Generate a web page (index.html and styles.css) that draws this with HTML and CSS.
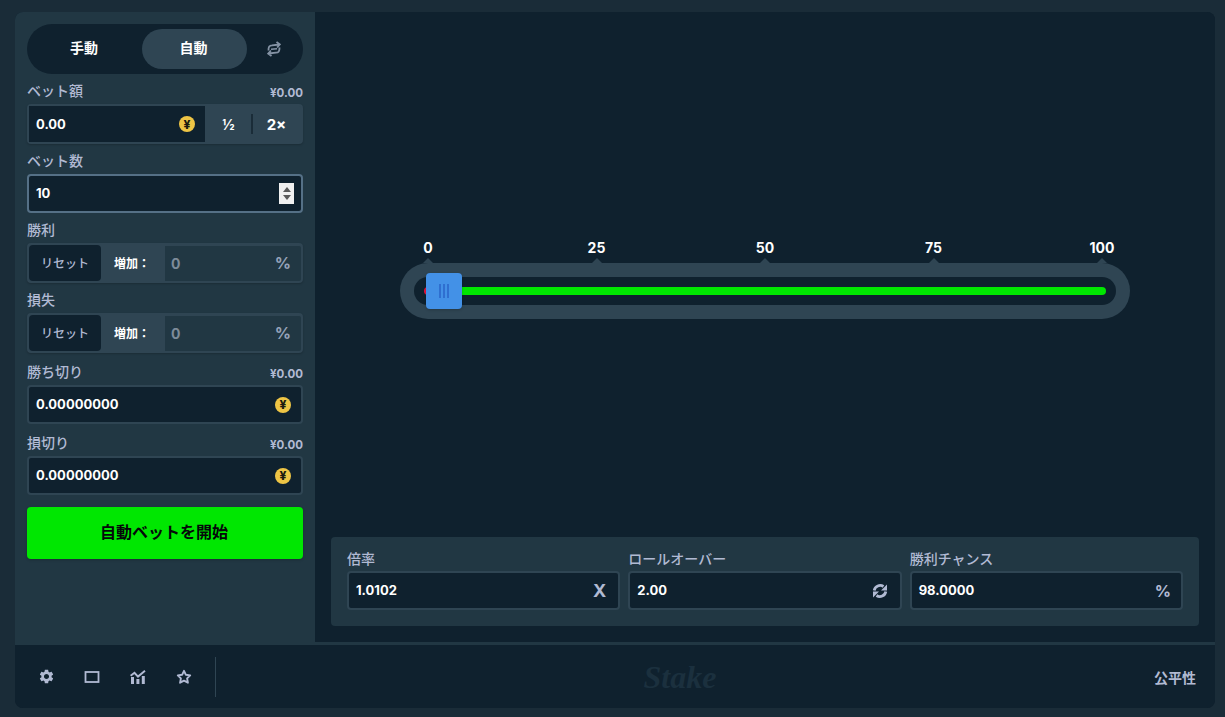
FILE: index.html
```html
<!DOCTYPE html>
<html lang="ja">
<head>
    <meta charset="UTF-8">
    <meta name="viewport" content="width=device-width, initial-scale=1.0">
    <title>Limbo</title>
    <link rel="stylesheet" href="styles.css">
</head>
<body>
<div class="frame">
    <div class="top">
        <aside class="sidebar">
            <div class="tabs">
                <div class="tab first">手動</div>
                <div class="tab active">自動</div>
                <div class="tab-icon">
                    <svg width="16" height="16" viewBox="0 0 16 16" fill="none" stroke="#8593a5" stroke-width="1.800">
                        <path d="M2.500 9.500C2.300 6 3.500 4.300 6 4.300l7.500-.8M10.500 1l3.300 2.500-2.700 3"/>
                        <path d="M13.500 6.500c.2 3.500-1 5.200-3.500 5.200l-7.500.8M5.500 15l-3.300-2.500 2.700-3"/>
                        <path d="M5 8.200l6-.4" stroke-width="1.600"/>
                    </svg>
                </div>
            </div>

            <div class="group">
                <div class="label-row"><span>ベット額</span><span class="amount">¥0.00</span></div>
                <div class="field joined">
                    <div class="inner">
                        <span class="value">0.00</span>
                        <span class="coin">¥</span>
                    </div>
                    <div class="half">½</div>
                    <div class="sep"></div>
                    <div class="half">2×</div>
                </div>
            </div>

            <div class="group">
                <div class="label-row"><span>ベット数</span></div>
                <div class="field short focused">
                    <span class="value">10</span>
                    <div class="spinner"><i class="up"></i><i class="down"></i></div>
                </div>
            </div>

            <div class="group">
                <div class="label-row"><span>勝利</span></div>
                <div class="field joined">
                    <div class="reset">リセット</div>
                    <div class="inc">増加：</div>
                    <div class="disabled"><span>0</span><span class="pct">%</span></div>
                </div>
            </div>

            <div class="group">
                <div class="label-row"><span>損失</span></div>
                <div class="field joined">
                    <div class="reset">リセット</div>
                    <div class="inc">増加：</div>
                    <div class="disabled"><span>0</span><span class="pct">%</span></div>
                </div>
            </div>

            <div class="group wide-gap">
                <div class="label-row"><span>勝ち切り</span><span class="amount">¥0.00</span></div>
                <div class="field short">
                    <span class="value">0.00000000</span>
                    <span class="coin">¥</span>
                </div>
            </div>

            <div class="group wide-gap">
                <div class="label-row"><span>損切り</span><span class="amount">¥0.00</span></div>
                <div class="field short">
                    <span class="value">0.00000000</span>
                    <span class="coin">¥</span>
                </div>
            </div>

            <button class="start">自動ベットを開始</button>
        </aside>

        <main class="game">
            <div class="stage">
                <div class="ticks">
                    <div class="tick"><span>0</span></div>
                    <div class="tick"><span>25</span></div>
                    <div class="tick"><span>50</span></div>
                    <div class="tick"><span>75</span></div>
                    <div class="tick"><span>100</span></div>
                </div>
                <div class="track">
                    <div class="groove">
                        <div class="bar"><div class="bar-lose"></div><div class="bar-win"></div></div>
                    </div>
                    <div class="handle"><i></i><i></i><i></i></div>
                </div>
            </div>

            <div class="stats">
                <div class="stat">
                    <div class="stat-label">倍率</div>
                    <div class="field short">
                        <span class="value">1.0102</span>
                        <span class="unit x">X</span>
                    </div>
                </div>
                <div class="stat">
                    <div class="stat-label">ロールオーバー</div>
                    <div class="field short">
                        <span class="value">2.00</span>
                        <svg class="refresh" width="16" height="16" viewBox="0 0 16 16" fill="none" stroke="#b1bad3" stroke-width="2.800">
                            <path d="M2.200 7.500A6 6 0 0 1 11.500 3.500"/>
                            <path d="M13.800 8.500A6 6 0 0 1 4.500 12.500"/>
                            <path d="M15 1.500v6h-6z" fill="#b1bad3" stroke="none"/>
                            <path d="M1 14.500v-6h6z" fill="#b1bad3" stroke="none"/>
                        </svg>
                    </div>
                </div>
                <div class="stat">
                    <div class="stat-label">勝利チャンス</div>
                    <div class="field short">
                        <span class="value">98.0000</span>
                        <span class="unit">%</span>
                    </div>
                </div>
            </div>
        </main>
    </div>

    <footer class="footer">
        <div class="tools">
            <button class="tool">
                <svg width="17" height="17" viewBox="0 0 24 24" fill="#b1bad3"><path d="M19.140 12.940c.04-.3.06-.61.06-.94 0-.32-.02-.64-.07-.94l2.030-1.580c.18-.14.23-.41.12-.61l-1.920-3.320c-.12-.22-.37-.29-.59-.22l-2.390.96c-.5-.38-1.030-.7-1.620-.94l-.36-2.540c-.04-.24-.24-.41-.48-.41h-3.840c-.24 0-.43.17-.47.41l-.36 2.540c-.59.24-1.130.57-1.620.94l-2.390-.96c-.22-.08-.47 0-.59.22L2.740 8.870c-.12.21-.08.47.12.61l2.030 1.580c-.05.3-.09.63-.09.94s.02.64.07.94l-2.030 1.580c-.18.14-.23.41-.12.61l1.920 3.320c.12.22.37.29.59.22l2.390-.96c.5.38 1.030.7 1.620.94l.36 2.540c.05.24.24.41.48.41h3.840c.24 0 .44-.17.47-.41l.36-2.540c.59-.24 1.130-.56 1.620-.94l2.390.96c.22.08.47 0 .59-.22l1.920-3.320c.12-.22.07-.47-.12-.61l-2.010-1.580zM12 15.600c-1.980 0-3.600-1.620-3.600-3.600s1.620-3.600 3.600-3.600 3.600 1.620 3.600 3.600-1.620 3.600-3.600 3.600z"/></svg>
            </button>
            <button class="tool">
                <svg width="16" height="16" viewBox="0 0 16 16" fill="none" stroke="#b1bad3" stroke-width="1.800"><rect x="1.500" y="3" width="13" height="10"/></svg>
            </button>
            <button class="tool">
                <svg width="16" height="16" viewBox="0 0 16 16" fill="#b1bad3"><path d="M1 15V8h3v7zM6.400 15v-5h3v5zM11.800 15V7h3v8z"/><path d="M.6 6.800 4.500 3.800 8 7.600l7-5.800" fill="none" stroke="#b1bad3" stroke-width="1.900"/></svg>
            </button>
            <button class="tool">
                <svg width="16" height="16" viewBox="0 0 16 16" fill="none" stroke="#b1bad3" stroke-width="1.900" stroke-linejoin="round"><path d="M8 1.800 9.900 5.800l4.300.6-3.100 3 .8 4.300L8 11.600l-3.900 2.100.8-4.300-3.100-3 4.300-.6z"/></svg>
            </button>
        </div>
        <div class="footer-sep"></div>
        <div class="logo">Stake</div>
        <div class="fairness">公平性</div>
    </footer>
</div>
</body>
</html>
```

FILE: styles.css
```css
* {
    box-sizing: border-box;
}
html, body {
    height: 100%;
}
body {
    margin: 0;
    padding: 12px 10px 9px 15px;
    background-color: #1a2c38;
    font-family: Inter, "Noto Sans CJK JP", sans-serif;
    color: #fff;
    overflow: hidden;
}
.frame {
    height: 696px;
    display: flex;
    flex-direction: column;
    border-radius: 8px;
    overflow: hidden;
    background: #0f212e;
}
.top {
    height: 630px;
    display: flex;
}

/* left column */
.sidebar {
    width: 300px;
    padding: 12px;
    background: #213743;
}
.tabs {
    height: 50px;
    padding: 5px;
    display: flex;
    align-items: center;
    background: #0f212e;
    border-radius: 25px;
    margin-bottom: 10px;
}
.tab {
    width: 105px;
    height: 40px;
    padding: 0 2px 5px 0;
    display: flex;
    align-items: center;
    justify-content: center;
    border-radius: 20px;
    font-size: 14px;
    font-weight: 700;
}
.tab.first {
    width: 110px;
    padding-right: 6px;
}
.tab.active {
    background: #2f4553;
}
.tab-icon {
    flex: 1;
    display: flex;
    justify-content: center;
    padding-left: 2px;
}
.group {
    margin-bottom: 10px;
}
.group.wide-gap {
    margin-bottom: 12px;
    margin-top: 12px;
}
.group.wide-gap + .group.wide-gap {
    margin-top: 0;
}
.label-row {
    height: 20px;
    display: flex;
    justify-content: space-between;
    align-items: flex-start;
    font-size: 14px;
    line-height: 14px;
    font-weight: 500;
    color: #b1bad3;
}
.amount {
    font-size: 11.500px;
    line-height: 18px;
    font-weight: 700;
    margin-left: -1px;
}
.field {
    height: 40px;
    display: flex;
    align-items: center;
    justify-content: space-between;
    padding: 0 10px 2px 7px;
    background: #0f212e;
    border: 2px solid #2f4553;
    border-radius: 4px;
}
.field.short {
    height: 39px;
}
.field.focused {
    border-color: #557086;
}
.field.joined {
    padding: 0;
    background: #2f4553;
    box-shadow: 0 1px 2px rgba(0, 0, 0, 0.2);
}
.value {
    font-size: 13px;
    font-weight: 700;
}
.inner {
    width: 176px;
    height: 100%;
    padding: 0 10px 0 7px;
    display: flex;
    align-items: center;
    justify-content: space-between;
    background: #0f212e;
}
.coin {
    width: 16px;
    height: 16px;
    display: flex;
    align-items: center;
    justify-content: center;
    border-radius: 50%;
    background: #eec545;
    color: #1b1b10;
    font-size: 12px;
    font-weight: 800;
}
.field.short .coin {
    margin-top: 2px;
}
.half {
    flex: 1;
    text-align: center;
    font-size: 14px;
    font-weight: 700;
}
.half + .sep + .half {
    padding-right: 1px;
    font-size: 15px;
}
.sep {
    width: 2px;
    height: 20px;
    margin-left: -1px;
    background: #1a2c38;
}
.spinner {
    width: 15px;
    height: 21px;
    margin-right: -3px;
    margin-top: 2px;
    display: flex;
    flex-direction: column;
    align-items: center;
    justify-content: center;
    gap: 3px;
    background: #f0f0f0;
}
.spinner i {
    width: 0;
    height: 0;
    border-left: 4px solid transparent;
    border-right: 4px solid transparent;
}
.spinner .up {
    border-bottom: 5px solid #5a5a5a;
}
.spinner .down {
    border-top: 5px solid #5a5a5a;
}
.reset {
    width: 72px;
    height: 36px;
    padding-bottom: 2px;
    display: flex;
    align-items: center;
    justify-content: center;
    background: #0f212e;
    border-radius: 4px;
    color: #b1bad3;
    font-size: 12px;
    font-weight: 500;
}
.inc {
    width: 64px;
    padding-bottom: 2px;
    padding-right: 2px;
    text-align: center;
    font-size: 12px;
    font-weight: 700;
}
.disabled {
    flex: 1;
    height: 35px;
    padding: 0 10px 0 6px;
    display: flex;
    align-items: center;
    justify-content: space-between;
    background: #213743;
    border-radius: 0 2px 2px 0;
    color: #7d8b99;
    font-size: 14px;
    font-weight: 700;
}
.pct {
    font-size: 16px;
    color: #96a2b8;
}
.start {
    display: block;
    width: 100%;
    height: 52px;
    padding: 0 2px 5px 0;
    border: none;
    border-radius: 4px;
    background: #00e701;
    color: #05080a;
    font-family: inherit;
    font-size: 16px;
    font-weight: 700;
    box-shadow: 0 1px 3px rgba(0, 0, 0, 0.2);
}

/* game side */
.game {
    flex: 1;
    display: flex;
    flex-direction: column;
    background: #0f212e;
}
.stage {
    height: 525px;
    padding: 228px 85px 0;
}
.ticks {
    height: 23px;
    padding: 0 28px;
    display: flex;
    justify-content: space-between;
}
.tick {
    width: 0;
    position: relative;
    display: flex;
    justify-content: center;
    font-size: 14px;
    line-height: 16px;
    font-weight: 700;
}
.tick::after {
    content: "";
    position: absolute;
    left: -5px;
    bottom: 0;
    border-left: 5px solid transparent;
    border-right: 5px solid transparent;
    border-bottom: 5px solid #2f4553;
}
.track {
    position: relative;
    height: 56px;
    padding: 14px;
    background: #2f4553;
    border-radius: 28px;
}
.groove {
    height: 28px;
    padding: 10px;
    background: #0f212e;
    border-radius: 14px;
}
.bar {
    height: 8px;
    display: flex;
    border-radius: 4px;
    overflow: hidden;
}
.bar-lose {
    width: 2%;
    background: #e9113c;
}
.bar-win {
    flex: 1;
    background: #00e701;
}
.handle {
    position: absolute;
    left: 26px;
    top: 10px;
    width: 36px;
    height: 36px;
    display: flex;
    align-items: center;
    justify-content: center;
    gap: 2px;
    background: #4391e7;
    border-radius: 4px;
    box-shadow: 0 1px 3px rgba(0, 0, 0, 0.2);
}
.handle i {
    width: 2px;
    height: 14px;
    background: #2f6fd0;
}
.stats {
    height: 89px;
    margin: 0 16px;
    padding: 13px 16px 0;
    display: flex;
    gap: 8px;
    background: #213743;
    border-radius: 4px;
}
.stat {
    flex: 1;
}
.stat-label {
    height: 21px;
    font-size: 14px;
    line-height: 17px;
    font-weight: 500;
    color: #b1bad3;
}
.unit {
    font-size: 16px;
    font-weight: 700;
    color: #b1bad3;
    margin-top: 2px;
}
.unit.x {
    font-size: 18px;
    margin-right: 2px;
}
.refresh {
    margin-right: 2px;
    margin-top: 2px;
}

/* footer */
.footer {
    flex: 1;
    display: flex;
    align-items: center;
    padding: 0 19px 0 8px;
    border-top: 3px solid #213743;
    background: #0f212e;
}
.tools {
    display: flex;
}
.tool {
    width: 46px;
    height: 40px;
    display: flex;
    align-items: center;
    justify-content: center;
    padding: 0;
    border: none;
    background: none;
}
.footer-sep {
    width: 1px;
    height: 40px;
    margin-left: 8px;
    background: #2f4553;
}
.logo {
    flex: 1;
    padding-right: 10px;
    text-align: center;
    font-family: "Liberation Serif", serif;
    font-style: italic;
    font-weight: 700;
    font-size: 32px;
    line-height: 40px;
    color: #1b303e;
}
.fairness {
    font-size: 14px;
    font-weight: 600;
    color: #b1bad3;
}
```
